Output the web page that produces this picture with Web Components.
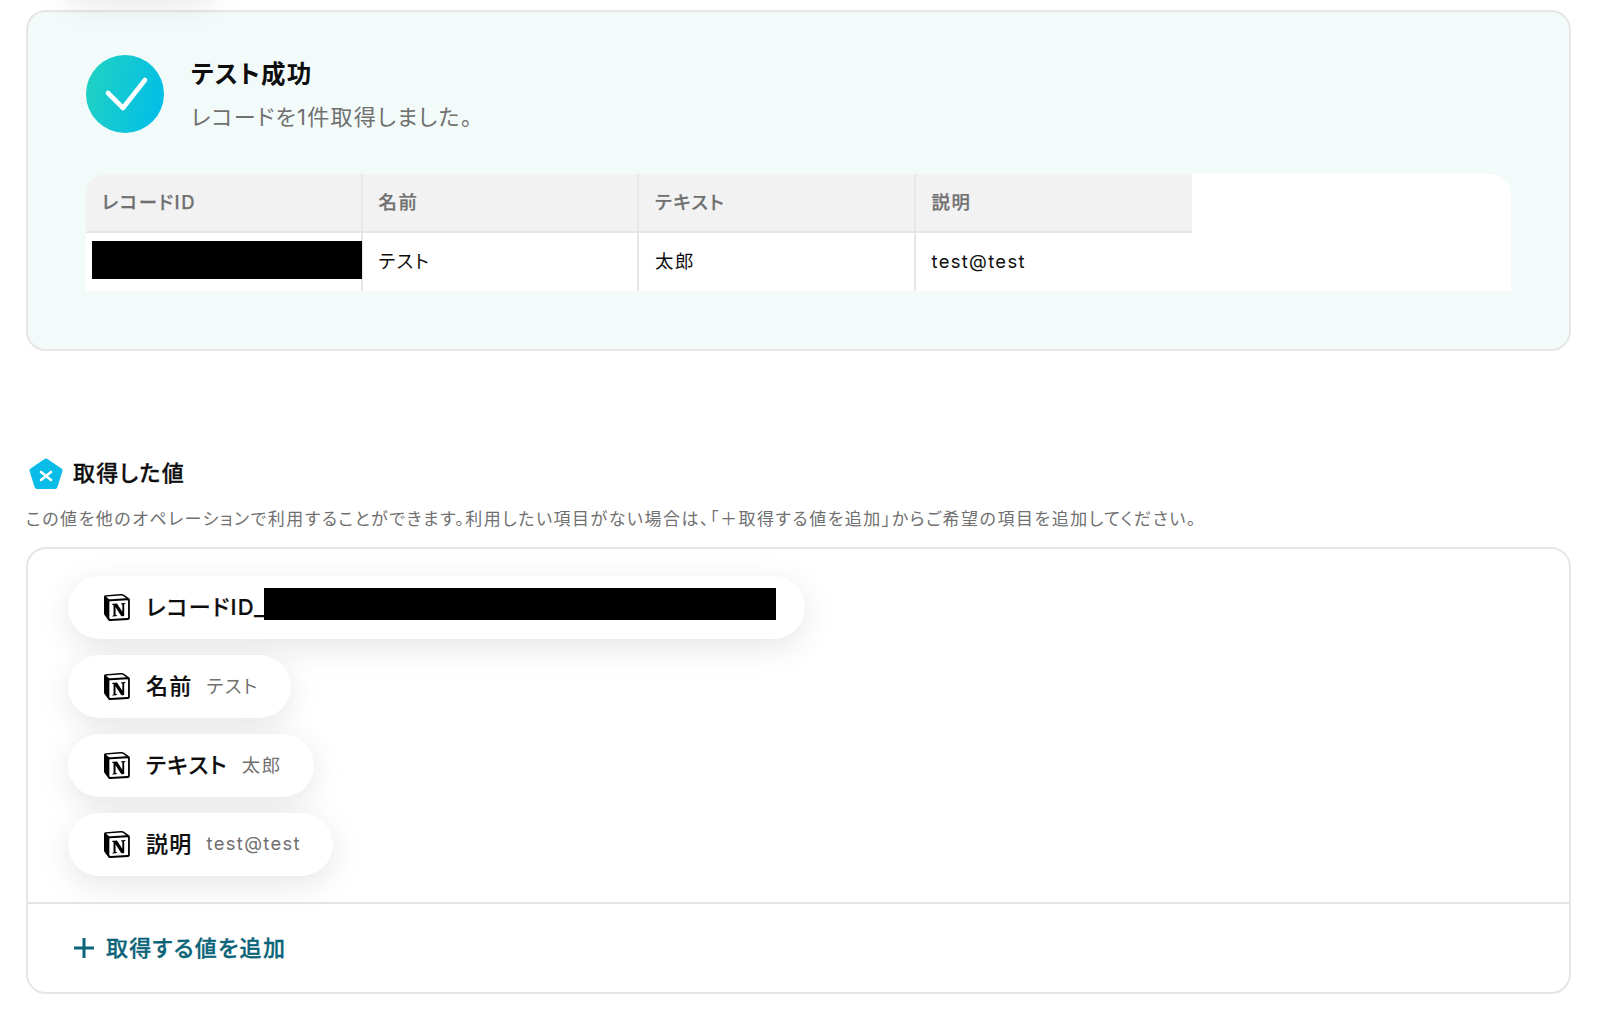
<!DOCTYPE html>
<html lang="ja">
<head>
<meta charset="utf-8">
<title>テスト成功</title>
<style>
  html, body { margin: 0; background: #fff; }
  body {
    font-family: Inter, "Noto Sans CJK JP", sans-serif;
    font-feature-settings: "palt";
    letter-spacing: 0.08em;
    color: #0d0d0d;
    height: 1016px;
    overflow: hidden;
  }
  main { display: block; padding: 10px 29px 0 26px; }
  .peek {
    position: absolute;
    left: 60px;
    top: -62px;
    width: 160px;
    height: 58px;
    border-radius: 30px;
    box-shadow: 0 8px 32px rgba(0, 0, 0, 0.1);
  }
</style>
</head>
<body>
<div class="peek"></div>
<main>
  <test-result title="テスト成功" message="レコードを1件取得しました。"></test-result>
  <section-heading title="取得した値" note="この値を他のオペレーションで利用することができます。利用したい項目がない場合は、「＋取得する値を追加」からご希望の項目を追加してください。"></section-heading>
  <value-panel>
    <value-pill name="レコードID_" redacted></value-pill>
    <value-pill name="名前" value="テスト"></value-pill>
    <value-pill name="テキスト" value="太郎"></value-pill>
    <value-pill name="説明" value="test@test" latin></value-pill>
  </value-panel>
</main>

<script>
const notionIcon = `
  <svg width="27" height="27" viewBox="0 0 100 100" aria-hidden="true">
    <path d="M6.017 4.313l55.333 -4.087c6.797 -0.583 8.543 -0.19 12.817 2.917l17.663 12.443c2.913 2.14 3.883 2.723 3.883 5.053v68.243c0 4.277 -1.553 6.807 -6.99 7.193L24.467 99.967c-4.08 0.193 -6.023 -0.39 -8.16 -3.113L3.3 79.94c-2.333 -3.113 -3.3 -5.443 -3.3 -8.167V11.113c0 -3.497 1.553 -6.413 6.017 -6.8z" fill="#fff"/>
    <path fill="#000" fill-rule="evenodd" clip-rule="evenodd" d="M61.35 0.227l-55.333 4.087C1.553 4.7 0 7.617 0 11.113v60.66c0 2.723 0.967 5.053 3.3 8.167l13.007 16.913c2.137 2.723 4.08 3.307 8.16 3.113l64.257 -3.89c5.433 -0.387 6.99 -2.917 6.99 -7.193V20.64c0 -2.21 -0.873 -2.847 -3.443 -4.733L74.167 3.143c-4.273 -3.107 -6.02 -3.5 -12.817 -2.917zM25.92 19.523c-5.247 0.353 -6.437 0.433 -9.417 -1.99L8.927 11.507c-0.77 -0.78 -0.383 -1.753 1.557 -1.947l53.193 -3.887c4.467 -0.39 6.793 1.167 8.54 2.527l9.123 6.61c0.39 0.197 1.36 1.36 0.193 1.36l-54.933 3.307 -0.68 0.047zM19.803 88.3V30.367c0 -2.53 0.777 -3.697 3.103 -3.893L86 22.78c2.14 -0.193 3.107 1.167 3.107 3.693v57.547c0 2.53 -0.39 4.67 -3.883 4.863l-60.377 3.5c-3.493 0.193 -5.043 -0.97 -5.043 -4.083zm59.6 -54.827c0.387 1.75 0 3.5 -1.75 3.7l-2.91 0.577v42.773c-2.527 1.36 -4.853 2.137 -6.797 2.137 -3.107 0 -3.883 -0.973 -6.21 -3.887l-19.03 -29.94v28.967l6.02 1.363s0 3.5 -4.857 3.5l-13.39 0.777c-0.39 -0.78 0 -2.723 1.357 -3.11l3.497 -0.97v-38.3L30.48 40.667c-0.39 -1.75 0.58 -4.277 3.3 -4.473l14.367 -0.967 19.8 30.327v-26.83l-5.047 -0.58c-0.39 -2.143 1.163 -3.7 3.103 -3.89l13.4 -0.78z"/>
  </svg>`;

class TestResult extends HTMLElement {
  constructor() {
    super();
    const root = this.attachShadow({ mode: 'open' });
    root.innerHTML = `
      <style>
        :host {
          display: block;
          box-sizing: border-box;
          height: 341px;
          padding: 43px 58px 0 58px;
          background: #f2fbf9;
          border: 2px solid #e6e6e6;
          border-radius: 20px;
        }
        .head { display: flex; align-items: flex-start; gap: 27px; height: 78px; }
        .badge {
          width: 78px;
          height: 78px;
          flex: none;
          border-radius: 50%;
          background: linear-gradient(105deg, #22d3c0 0%, #00bceb 100%);
        }
        .badge svg { display: block; }
        h2 { margin: 1px 0 0; font-size: 24.5px; line-height: 36px; font-weight: 700; height: 36px; }
        p { margin: 10px 0 0; font-size: 22px; line-height: 30px; color: #707070; }
        record-table { margin-top: 41px; }
      </style>
      <div class="head">
        <div class="badge">
          <svg width="78" height="78" viewBox="0 0 78 78" aria-hidden="true">
            <path d="M22 38 L37 53 L59 25" fill="none" stroke="#fff" stroke-width="4.6" stroke-linecap="round" stroke-linejoin="round"/>
          </svg>
        </div>
        <div>
          <h2>${this.getAttribute('title')}</h2>
          <p>${this.getAttribute('message')}</p>
        </div>
      </div>
      <record-table></record-table>`;
  }
}

class RecordTable extends HTMLElement {
  constructor() {
    super();
    const cols = ['レコードID', '名前', 'テキスト', '説明'];
    const row = [null, 'テスト', '太郎', 'test@test'];
    const root = this.attachShadow({ mode: 'open' });
    root.innerHTML = `
      <style>
        :host {
          display: block;
          height: 117px;
          background: #fff;
          border-radius: 20px 20px 0 0;
          overflow: hidden;
        }
        .grid { display: grid; grid-template-columns: repeat(4, 276.5px); grid-template-rows: 59px 58px; width: max-content; }
        .cell {
          box-sizing: border-box;
          display: flex;
          align-items: center;
          padding: 0 16px 3px;
          border-right: 2px solid #e6e6e6;
          font-size: 18.4px;
          letter-spacing: 0.085em;
        }
        .cell:nth-child(4n) { border-right: 0; }
        .th { background: #f2f2f2; border-bottom: 2px solid #e6e6e6; color: #707070; font-weight: 500; -webkit-text-stroke: 0.25px currentColor; }
        .td { color: #0d0d0d; padding-bottom: 5px; }
        .latin { letter-spacing: 0.072em; padding-bottom: 3px; }
        .redact { flex: 1; align-self: flex-start; height: 38px; background: #000; margin: 8px -17px 0 -10px; }
      </style>
      <div class="grid">
        ${cols.map(c => `<div class="cell th">${c}</div>`).join('')}
        ${row.map(v => `<div class="cell td${v && v.includes('@') ? ' latin' : ''}">${v === null ? '<div class="redact"></div>' : v}</div>`).join('')}
      </div>`;
  }
}

class SectionHeading extends HTMLElement {
  constructor() {
    super();
    const root = this.attachShadow({ mode: 'open' });
    root.innerHTML = `
      <style>
        :host { display: block; padding-top: 106px; }
        .title { display: flex; align-items: center; gap: 10px; padding-left: 3px; height: 34px; }
        h3 { margin: 0; padding-bottom: 2px; font-size: 22px; line-height: 32px; font-weight: 500; -webkit-text-stroke: 0.3px currentColor; }
        p { margin: 16px 0 0; font-size: 17px; line-height: 24px; letter-spacing: 1.51px; color: #707070; white-space: nowrap; }
      </style>
      <div class="title">
        <svg width="34" height="32" viewBox="0 0 34 32" aria-hidden="true">
          <path d="M17 3 L31 12.5 L26 28.5 H8 L3 12.5 Z" fill="#0abde8" stroke="#0abde8" stroke-width="5" stroke-linejoin="round"/>
          <path d="M12 14 L22 22 M22 14 L12 22" fill="none" stroke="#fff" stroke-width="2.6" stroke-linecap="round"/>
        </svg>
        <h3>${this.getAttribute('title')}</h3>
      </div>
      <p>${this.getAttribute('note')}</p>`;
  }
}

class ValuePanel extends HTMLElement {
  constructor() {
    super();
    const root = this.attachShadow({ mode: 'open' });
    root.innerHTML = `
      <style>
        :host {
          display: block;
          box-sizing: border-box;
          height: 447px;
          margin-top: 16px;
          border: 2px solid #e6e6e6;
          border-radius: 20px;
          background: #fff;
        }
        .list {
          box-sizing: border-box;
          height: 355px;
          padding: 27px 40px 0;
          display: flex;
          flex-direction: column;
          align-items: flex-start;
          gap: 16px;
          border-bottom: 2px solid #e6e6e6;
        }
        .add {
          display: flex;
          align-items: center;
          gap: 11px;
          height: 88px;
          padding-left: 45px;
          color: #0a6478;
          font-size: 22px;
          font-weight: 500;
        }
        .add span { padding-bottom: 5px; -webkit-text-stroke: 0.3px currentColor; }
      </style>
      <div class="list"><slot></slot></div>
      <div class="add">
        <svg width="22" height="22" viewBox="0 0 22 22" aria-hidden="true">
          <path d="M11 1 V21 M1 11 H21" stroke="#0a6478" stroke-width="3" fill="none"/>
        </svg>
        <span>取得する値を追加</span>
      </div>`;
  }
}

class ValuePill extends HTMLElement {
  constructor() {
    super();
    const root = this.attachShadow({ mode: 'open' });
    const value = this.getAttribute('value');
    const spacing = this.hasAttribute('latin') ? '0.072em' : '0.085em';
    root.innerHTML = `
      <style>
        :host {
          display: flex;
          box-sizing: border-box;
          height: 63px;
          align-items: center;
          padding: 0 32px 0 36px;
          border-radius: 32px;
          background: #fff;
          box-shadow: 0 8px 32px rgba(0, 0, 0, 0.1);
        }
        svg { flex: none; margin-right: 15px; }
        .name { font-size: 22px; font-weight: 500; color: #0d0d0d; padding-bottom: 5px; -webkit-text-stroke: 0.2px currentColor; }
        .value { font-size: 18.4px; letter-spacing: ${spacing}; color: #707070; margin-left: 14px; padding-bottom: 3px; }
        .redact { width: 512px; height: 32px; background: #000; margin: 0 -3px 8px -2px; }
      </style>
      ${notionIcon}
      <span class="name">${this.getAttribute('name')}</span>
      ${this.hasAttribute('redacted') ? '<div class="redact"></div>' : ''}
      ${value ? `<span class="value">${value}</span>` : ''}`;
  }
}

customElements.define('record-table', RecordTable);
customElements.define('test-result', TestResult);
customElements.define('section-heading', SectionHeading);
customElements.define('value-panel', ValuePanel);
customElements.define('value-pill', ValuePill);
</script>
</body>
</html>
